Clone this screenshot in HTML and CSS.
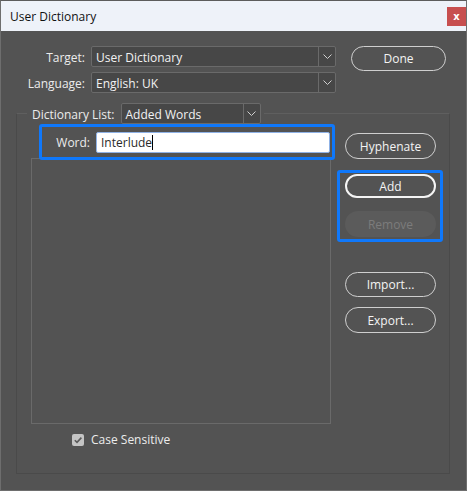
FILE: index.html
```html
<!DOCTYPE html>
<html lang="en">
<head>
<meta charset="utf-8">
<title>User Dictionary</title>
<link rel="stylesheet" href="styles.css">
</head>
<body>
<div class="window">
  <header class="titlebar">
    <span class="title">User Dictionary</span>
    <button class="close" type="button">x</button>
  </header>
  <main class="content">
    <div class="top">
      <div class="form">
        <span class="lbl">Target:</span>
        <div class="select">
          <span class="value">User Dictionary</span>
          <span class="arrow"><svg width="9" height="5" viewBox="0 0 9 5"><path d="M0.5 0.5 L4.5 4.5 L8.5 0.5" fill="none" stroke="#cfcfcf" stroke-width="1"/></svg></span>
        </div>
        <span class="lbl">Language:</span>
        <div class="select">
          <span class="value">English: UK</span>
          <span class="arrow"><svg width="9" height="5" viewBox="0 0 9 5"><path d="M0.5 0.5 L4.5 4.5 L8.5 0.5" fill="none" stroke="#cfcfcf" stroke-width="1"/></svg></span>
        </div>
      </div>
      <button class="btn done" type="button">Done</button>
    </div>

    <fieldset class="group">
      <legend class="legend">
        <span class="lbl">Dictionary List:</span>
        <div class="select list-select">
          <span class="value">Added Words</span>
          <span class="arrow"><svg width="9" height="5" viewBox="0 0 9 5"><path d="M0.5 0.5 L4.5 4.5 L8.5 0.5" fill="none" stroke="#cfcfcf" stroke-width="1"/></svg></span>
        </div>
      </legend>
      <div class="group-body">
        <div class="list-col">
          <div class="word-edit">
            <span class="lbl">Word:</span>
            <div class="input"><span>Interlude</span><span class="caret"></span></div>
          </div>
          <div class="list"></div>
          <div class="check">
            <span class="box"><svg width="10" height="10" viewBox="0 0 10 10"><path d="M1.8 5.2 L4 7.4 L8.4 2.6" fill="none" stroke="#5a5a5a" stroke-width="1.6"/></svg></span>
            <span>Case Sensitive</span>
          </div>
        </div>
        <div class="btn-col">
          <button class="btn hyphenate" type="button">Hyphenate</button>
          <div class="focus-group">
            <button class="btn add" type="button">Add</button>
            <button class="btn disabled" type="button">Remove</button>
          </div>
          <button class="btn import" type="button">Import...</button>
          <button class="btn export" type="button">Export...</button>
        </div>
      </div>
    </fieldset>
  </main>
</div>
</body>
</html>
```

FILE: styles.css
```css
* {
  box-sizing: border-box;
}

html, body {
  margin: 0;
  padding: 0;
  background: #535353;
}

body {
  font-family: "Open Sans", "Noto Sans", "DejaVu Sans", sans-serif;
  font-size: 12px;
  color: #ececec;
}

.window {
  width: 467px;
  height: 491px;
  border: 1px solid #6e6e6e;
  border-top-color: #5c5c5c;
  background: #535353;
  display: flex;
  flex-direction: column;
}

/* title bar */
.titlebar {
  height: 30px;
  background: #eef2f9;
  display: flex;
  align-items: center;
  justify-content: space-between;
  padding-left: 9px;
}

.title {
  color: #111;
  font-size: 12px;
}

.close {
  width: 19px;
  height: 19px;
  border: 0;
  padding: 0;
  background: #c74f4f;
  color: #fff;
  font-family: "DejaVu Sans", sans-serif;
  font-weight: bold;
  font-size: 10px;
  line-height: 17px;
}

.content {
  flex: 1;
  padding: 15px 16px 0 15px;
  display: flex;
  flex-direction: column;
}

/* target / language */
.top {
  display: flex;
  align-items: flex-start;
}

.form {
  display: grid;
  grid-template-columns: 69px 245px;
  column-gap: 6px;
  row-gap: 5px;
  align-items: center;
}

.lbl {
  text-align: right;
  white-space: nowrap;
  padding-top: 1px;
}

.select {
  height: 21px;
  background: #474747;
  border: 1px solid #6a6a6a;
  border-radius: 2px;
  display: flex;
  align-items: center;
}

.select .value {
  flex: 1;
  padding: 1px 0 0 4px;
  white-space: nowrap;
  color: #f2f2f2;
}

.select .arrow {
  width: 17px;
  height: 100%;
  border-left: 1px solid #6a6a6a;
  display: flex;
  align-items: center;
  justify-content: center;
}

/* pill buttons */
.btn {
  width: 91px;
  height: 25px;
  padding: 0;
  border: 1px solid #cfcfcf;
  border-radius: 13px;
  background: transparent;
  color: #f4f4f4;
  font-family: inherit;
  font-size: 12px;
}

.done {
  width: 95px;
  margin-left: 15px;
}

/* dictionary list group */
.group {
  margin: 10px 0 0 0;
  padding: 0 6px 25px 10px;
  border: 1px solid #4a4a4a;
  border-top-color: #5f5f5f;
  min-width: 0;
}

.legend {
  padding: 0 3px 0 5px;
  display: flex;
  align-items: center;
  gap: 6px;
}

.list-select {
  width: 140px;
}

.group-body {
  display: flex;
  gap: 2px;
}

.list-col {
  width: 309px;
  display: flex;
  flex-direction: column;
}

.word-edit {
  position: relative;
  z-index: 1;
  height: 36px;
  margin-left: 12px;
  border: 3px solid #0f78fb;
  border-radius: 3px;
  display: flex;
  align-items: center;
  padding: 0 2px 0 0;
}

.word-edit .lbl {
  width: 48px;
}

.input {
  flex: 1;
  height: 21px;
  margin-left: 6px;
  background: #fff;
  border: 1px solid #8fb2e6;
  border-radius: 2px;
  color: #2a2a2a;
  display: flex;
  align-items: center;
  padding-left: 4px;
}

.caret {
  width: 1px;
  height: 15px;
  background: #000;
}

.list {
  height: 266px;
  margin: -2px 4px 0 4px;
  border: 1px solid #6a6a6a;
}

.check {
  margin: 7px 0 0 45px;
  display: flex;
  align-items: center;
  gap: 7px;
}

.box {
  width: 12px;
  height: 12px;
  border-radius: 2px;
  background: #c4c4c4;
  display: flex;
  align-items: center;
  justify-content: center;
}

.btn-col {
  width: 106px;
  display: flex;
  flex-direction: column;
  align-items: flex-start;
}

.btn-col > .btn {
  margin-left: 8px;
}

.hyphenate {
  margin-top: 9px;
  height: 26px;
}

.focus-group {
  margin-top: 11px;
  width: 106px;
  border: 3px solid #0f78fb;
  border-radius: 3px;
  padding: 1px 0 2px 5px;
  display: flex;
  flex-direction: column;
}

.add {
  height: 24px;
  border: 2px solid #f4f4f4;
}

.disabled {
  margin-top: 13px;
  height: 26px;
  border: 0;
  background: #5b5b5b;
  color: #7c7c7c;
}

.import {
  margin-top: 30px;
}

.export {
  margin-top: 10px;
  height: 26px;
}
```
